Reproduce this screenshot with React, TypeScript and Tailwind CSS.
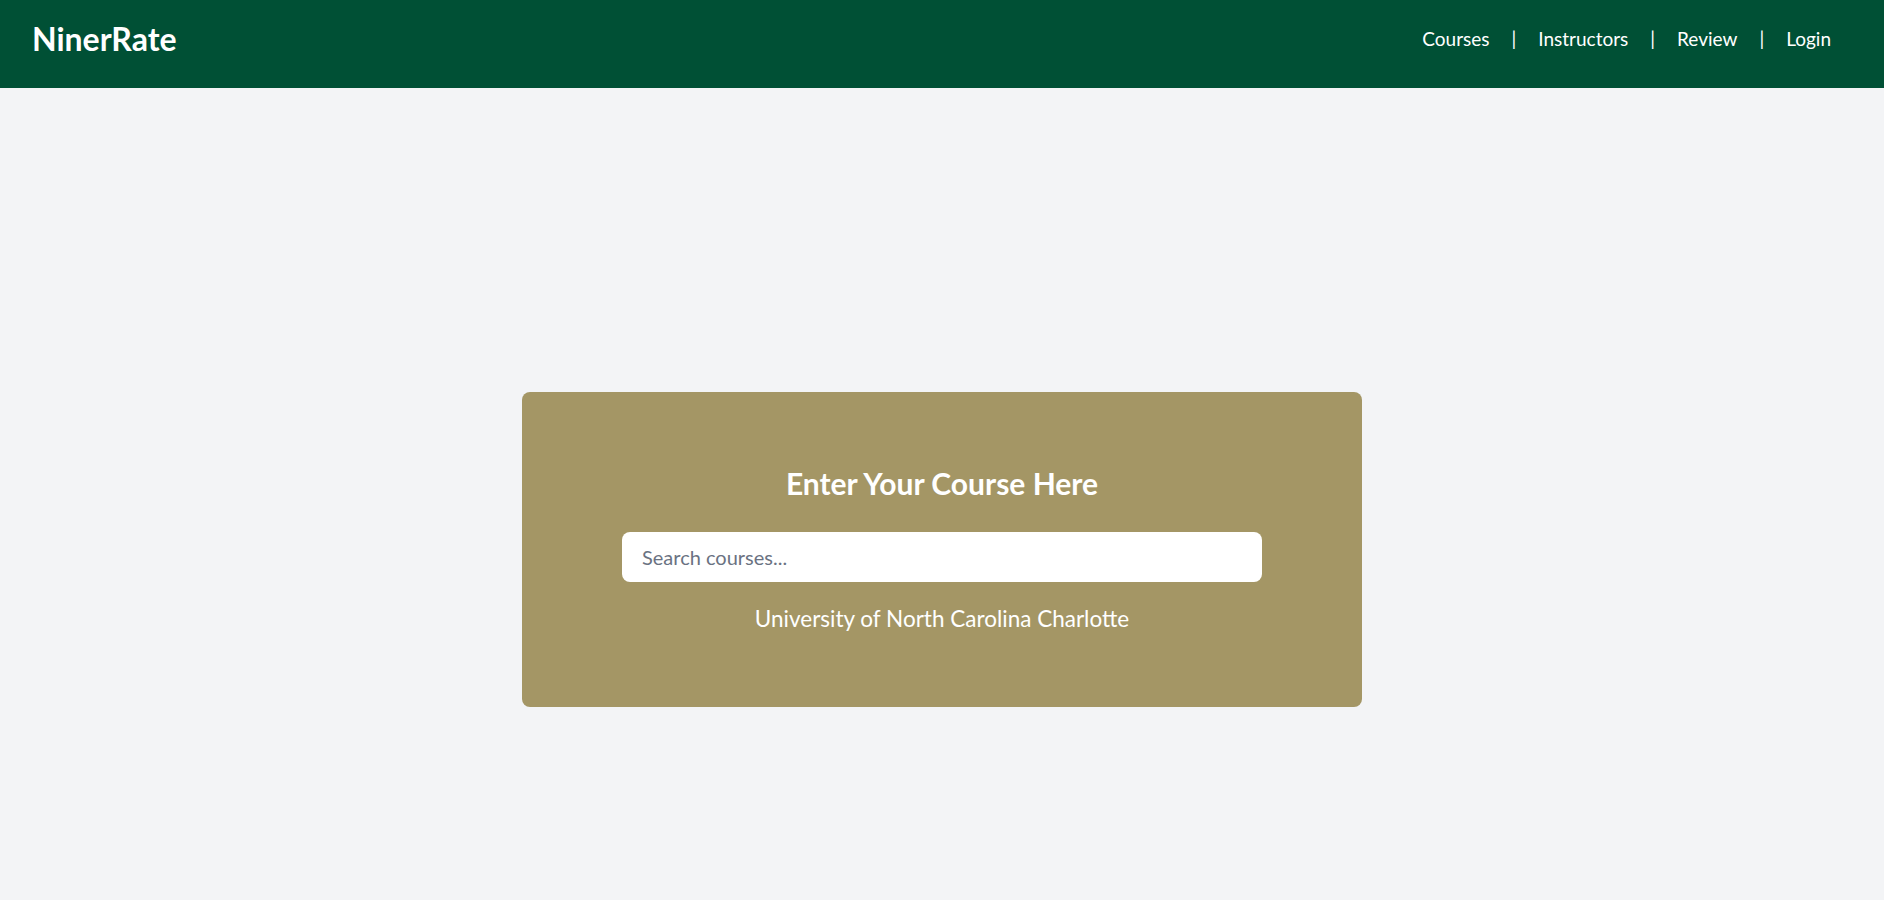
import { useState } from 'react'

const NAV_LINKS = ['Courses', 'Instructors', 'Review', 'Login']

export default function App() {
  const [query, setQuery] = useState('')

  return (
    <div className="min-h-screen bg-[#f3f4f6] font-['Lato','Noto_Sans',sans-serif]">
      <header className="h-[88px] bg-[#005035] flex items-center justify-between pl-[32px] pr-[53px] pb-[10px]">
        <h1 className="text-[32px] font-bold text-white">NinerRate</h1>
        <nav className="flex items-center text-[19px] text-white">
          {NAV_LINKS.map((link, i) => (
            <div key={link} className="flex items-center">
              {i > 0 && <span className="mx-[22px]">|</span>}
              <a href="#" className="hover:underline">{link}</a>
            </div>
          ))}
        </nav>
      </header>

      <main className="flex justify-center pt-[304px]">
        {/* Search card */}
        <div className="w-[840px] h-[315px] bg-[#a49665] rounded-lg flex flex-col items-center justify-center">
          <h2 className="text-[30px] leading-9 font-bold text-white">Enter Your Course Here</h2>
          <input
            type="text"
            value={query}
            onChange={(e) => setQuery(e.target.value)}
            placeholder="Search courses..."
            className="mt-[31px] w-[640px] h-[50px] rounded-lg bg-white px-5 text-[20px] text-gray-800 placeholder:text-gray-500 outline-none"
          />
          <p className="mt-[21px] text-[22.5px] leading-8 text-white">University of North Carolina Charlotte</p>
        </div>
      </main>
    </div>
  )
}
